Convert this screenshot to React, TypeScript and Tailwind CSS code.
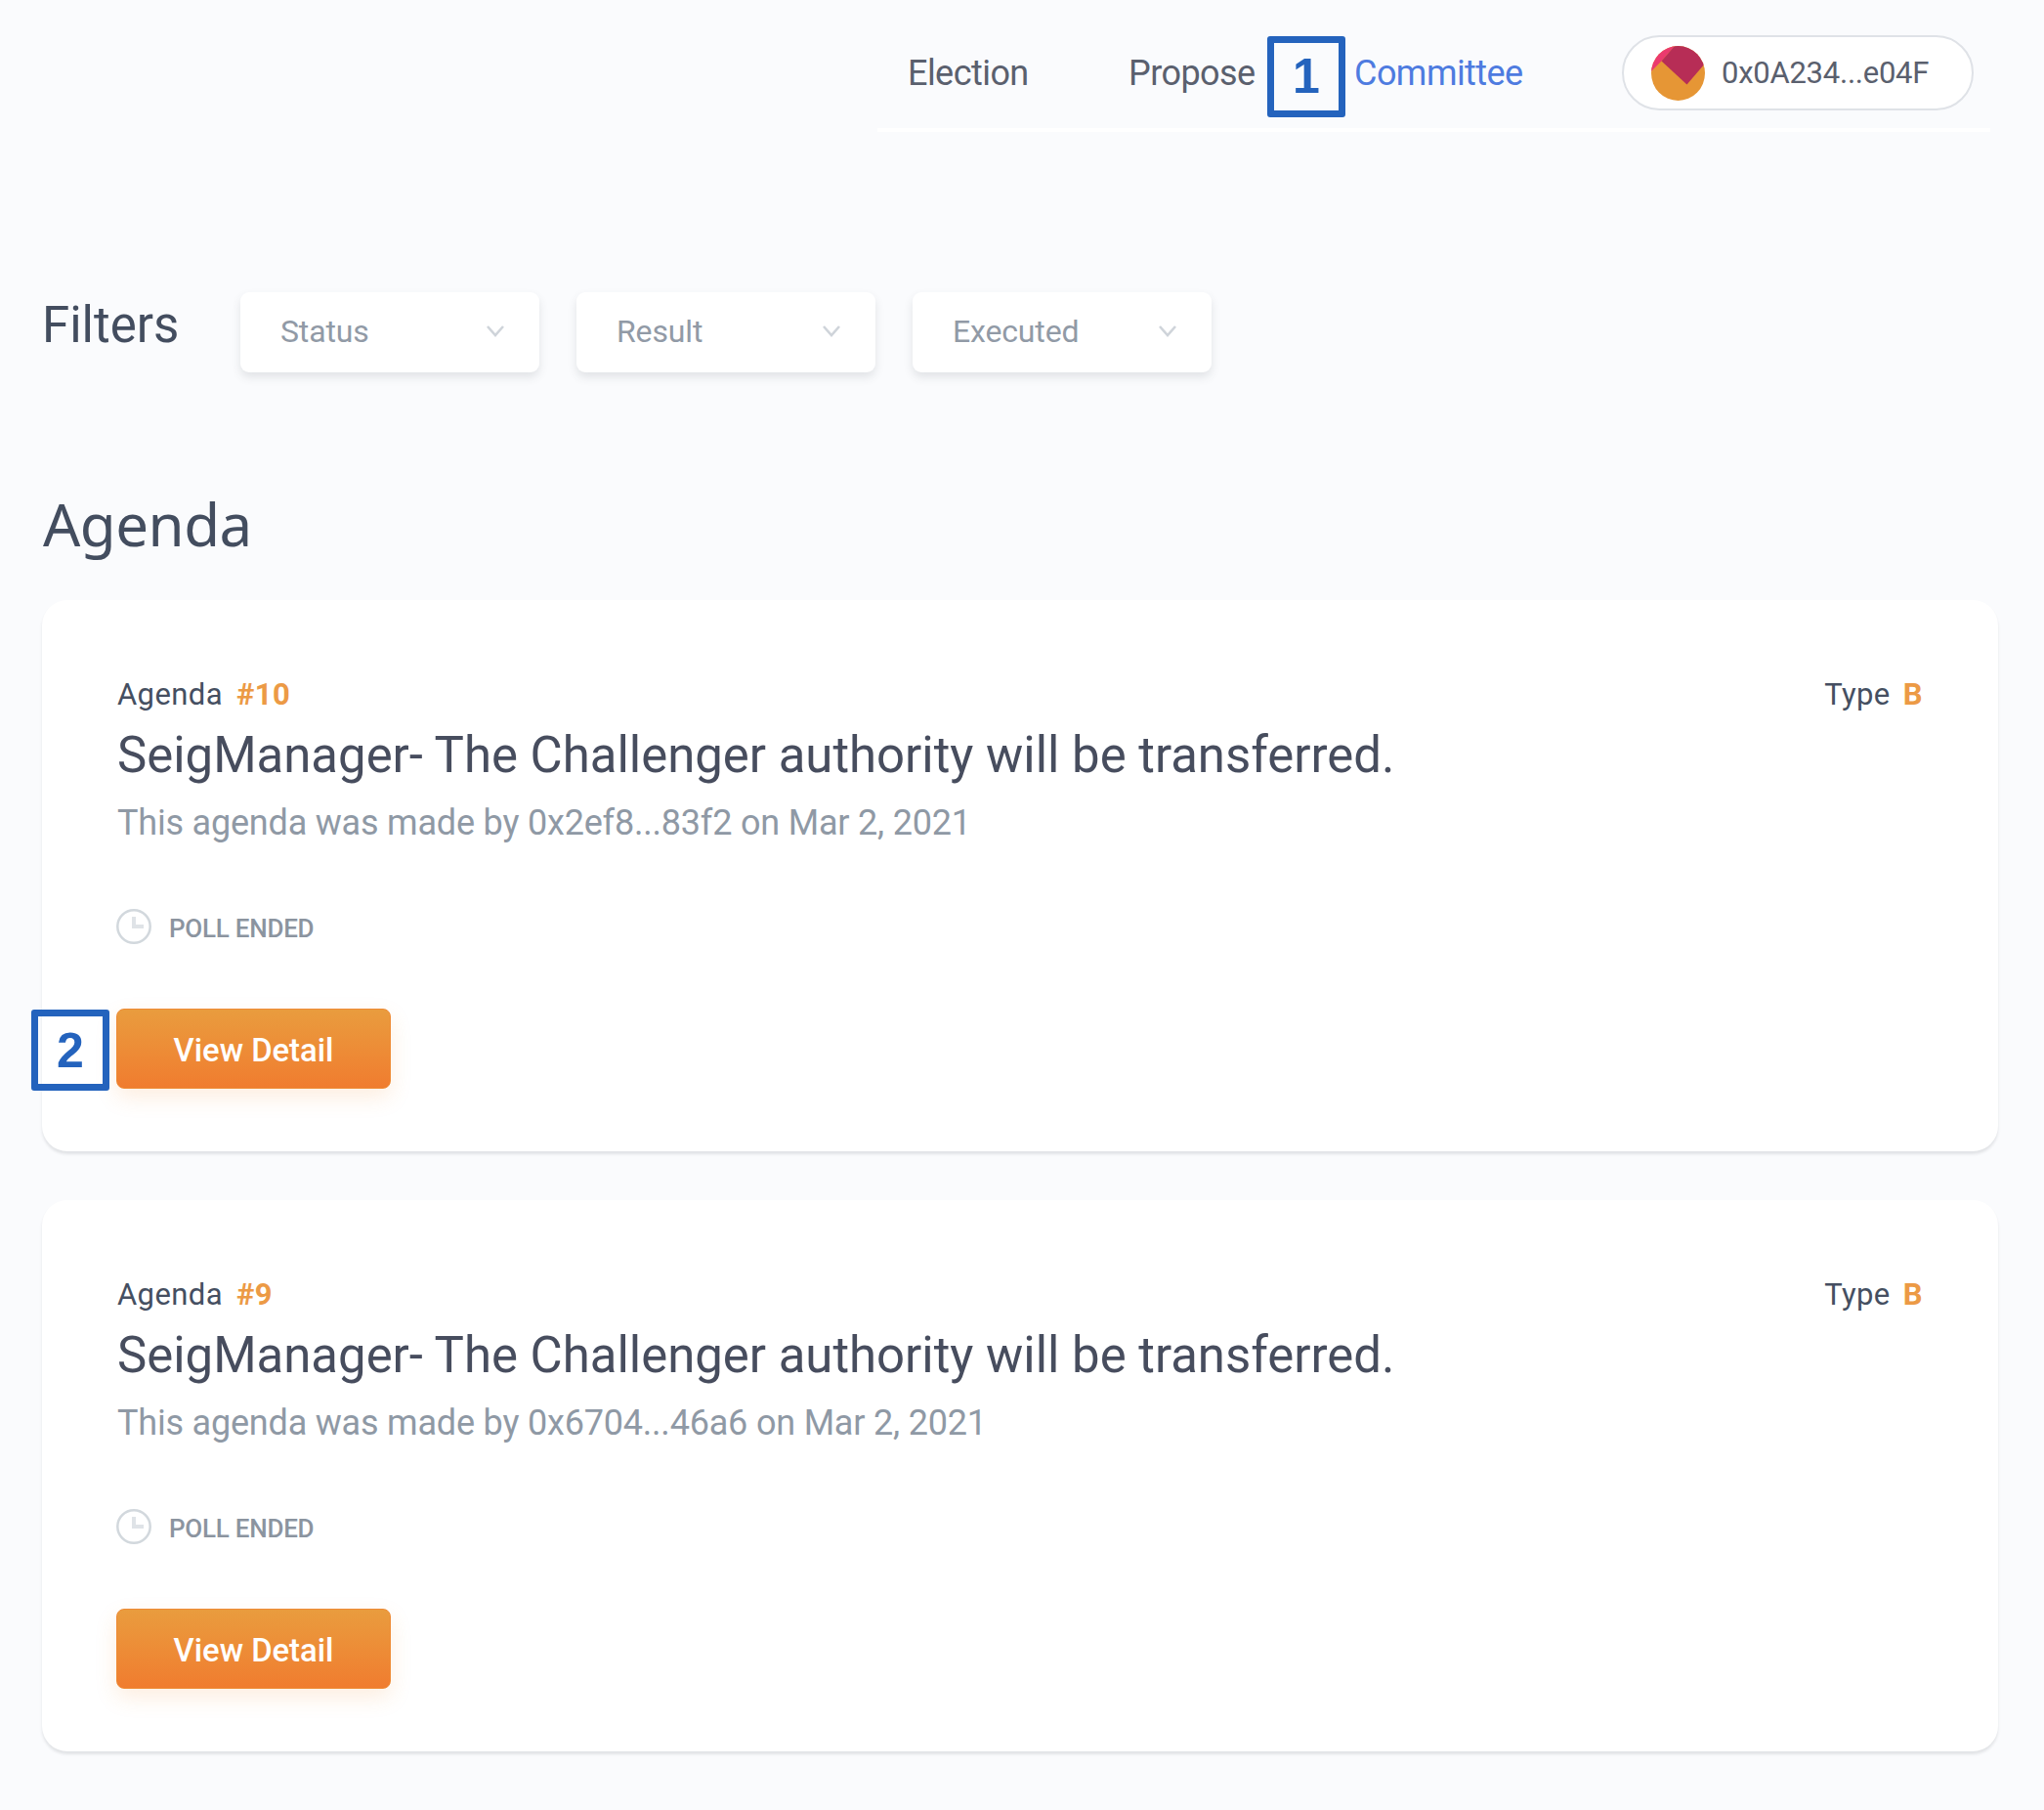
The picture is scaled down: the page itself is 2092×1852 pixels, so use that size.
import React from "react";

const agendas = [
  { id: 10, author: "0x2ef8...83f2", date: "Mar 2, 2021", type: "B", step: "2" },
  { id: 9, author: "0x6704...46a6", date: "Mar 2, 2021", type: "B", step: "" },
];

const filters = ["Status", "Result", "Executed"];

function StepMarker({ label, className }: { label: string; className: string }) {
  return (
    <div
      className={`absolute flex h-[83px] w-[80px] items-center justify-center rounded-[3px] border-[7.5px] border-[#2463bd] font-['Liberation_Sans',sans-serif] text-[50px] leading-none font-bold tracking-normal text-[#2463bd] ${className}`}
    >
      {label}
    </div>
  );
}

function Avatar() {
  return (
    <svg viewBox="0 0 55 56" className="h-[56px] w-[55px]">
      <defs>
        <clipPath id="avatar-clip">
          <ellipse cx="27.5" cy="28" rx="27.5" ry="28" />
        </clipPath>
      </defs>
      <g clipPath="url(#avatar-clip)">
        <rect width="55" height="56" fill="#e69635" />
        <path d="M0 26 L10 16 L24 0 L0 0Z" fill="#eb3a6e" />
        <path d="M10.500 15.500 L24 0 H55 V18 L36.500 39.500Z" fill="#b72d56" />
      </g>
    </svg>
  );
}

function Header() {
  return (
    <header className="mr-[55px] ml-[898px] flex h-[135px] items-start border-b-4 border-white pt-[36px] pl-[31px] text-[36px] text-[#5a606e]">
      <nav className="flex h-[77px] flex-1 items-center leading-none tracking-[-0.55px]">
        <a className="w-[226px]">Election</a>
        <a className="relative w-[231px]">
          Propose
          <StepMarker label="1" className="top-[-20px] left-[142px]" />
        </a>
        <a className="text-[#4e7be0]">Committee</a>
      </nav>
      <div className="mr-[17px] flex h-[77px] w-[360px] items-center gap-[17px] rounded-full border-[2.5px] border-[#dfe2e7] bg-white pl-[28px] text-[31px]">
        <Avatar />
        <span className="leading-none tracking-[-0.25px]">0x0A234...e04F</span>
      </div>
    </header>
  );
}

function Select({ label }: { label: string }) {
  return (
    <div className="flex h-[82px] w-[306px] items-center justify-between rounded-[9px] bg-white pr-[36px] pb-[3px] pl-[41px] shadow-[0_5px_10px_rgba(60,70,80,0.13)]">
      <span className="text-[32px] leading-none tracking-[-0.15px] text-[#919aa6]">{label}</span>
      <svg viewBox="0 0 18 12" className="h-[12px] w-[18px]" fill="none" stroke="#cfd4da" strokeWidth="2.6">
        <path d="M1 1 L9 10 L17 1" />
      </svg>
    </div>
  );
}

function Clock() {
  return (
    <svg viewBox="0 0 36 36" className="h-[36px] w-[36px]" fill="none">
      <circle cx="18" cy="18" r="16.700" stroke="#d2d8dd" strokeWidth="2.500" />
      <path d="M18 8 V18 H28" stroke="#dfe3e7" strokeWidth="4" />
    </svg>
  );
}

function AgendaCard({ item }: { item: (typeof agendas)[number] }) {
  return (
    <article className="relative flex h-[564px] flex-col items-start rounded-[26px] bg-white pt-[81px] pr-[77px] pl-[76px] shadow-[0_3px_3px_rgba(60,70,80,0.13)]">
      <div className="flex w-full justify-between pl-px text-[31px] leading-[32px] tracking-[0.4px] text-[#454f61]">
        <p>
          Agenda <b className="ml-[6px] font-bold text-[#ec9a45]">#{item.id}</b>
        </p>
        <p>
          Type <b className="ml-[5px] font-bold text-[#ec9a45]">{item.type}</b>
        </p>
      </div>
      <h2 className="mt-[16px] pl-px text-[50.9px] leading-[60px] text-[#474d5e]">
        SeigManager- The Challenger authority will be transferred.
      </h2>
      <p className="mt-[19px] pl-px text-[36px] leading-[40px] tracking-[-0.2px] text-[#8f99a5]">
        This agenda was made by {item.author} on {item.date}
      </p>
      <div className="mt-[68px] flex items-center gap-[18px]">
        <Clock />
        <span className="pt-[4px] text-[26px] leading-[32px] font-medium tracking-[-0.25px] text-[#8b949f]">
          POLL ENDED
        </span>
      </div>
      <button className="mt-[66px] h-[82px] w-[281px] rounded-[8px] border border-[#ee8b35] bg-linear-to-b from-[#e99c3e] to-[#f07c2f] pt-[4px] text-[32.8px] leading-none font-medium text-white shadow-[0_9px_22px_rgba(240,140,50,0.15)]">
        View Detail
      </button>
      {item.step && <StepMarker label={item.step} className="top-[419px] left-[-11px]" />}
    </article>
  );
}

export default function App() {
  return (
    <main className="h-[1852px] w-[2092px] overflow-hidden bg-[#fafbfd] font-['Roboto',sans-serif] whitespace-nowrap">
      <Header />
      <section className="mt-[164px] flex items-center pl-[43px]">
        <h3 className="w-[203px] pb-[16px] text-[51px] leading-none text-[#434d5f]">Filters</h3>
        <div className="flex gap-[38px]">
          {filters.map((label) => (
            <Select key={label} label={label} />
          ))}
        </div>
      </section>
      <section className="mr-[47px] ml-[43px]">
        <h1 className="mt-[115px] h-[118px] pl-px font-['Noto_Sans',sans-serif] text-[60px] leading-[80px] tracking-[-0.5px] text-[#434d5f]">
          Agenda
        </h1>
        <div className="flex flex-col gap-[50px]">
          {agendas.map((item) => (
            <AgendaCard key={item.id} item={item} />
          ))}
        </div>
      </section>
    </main>
  );
}
